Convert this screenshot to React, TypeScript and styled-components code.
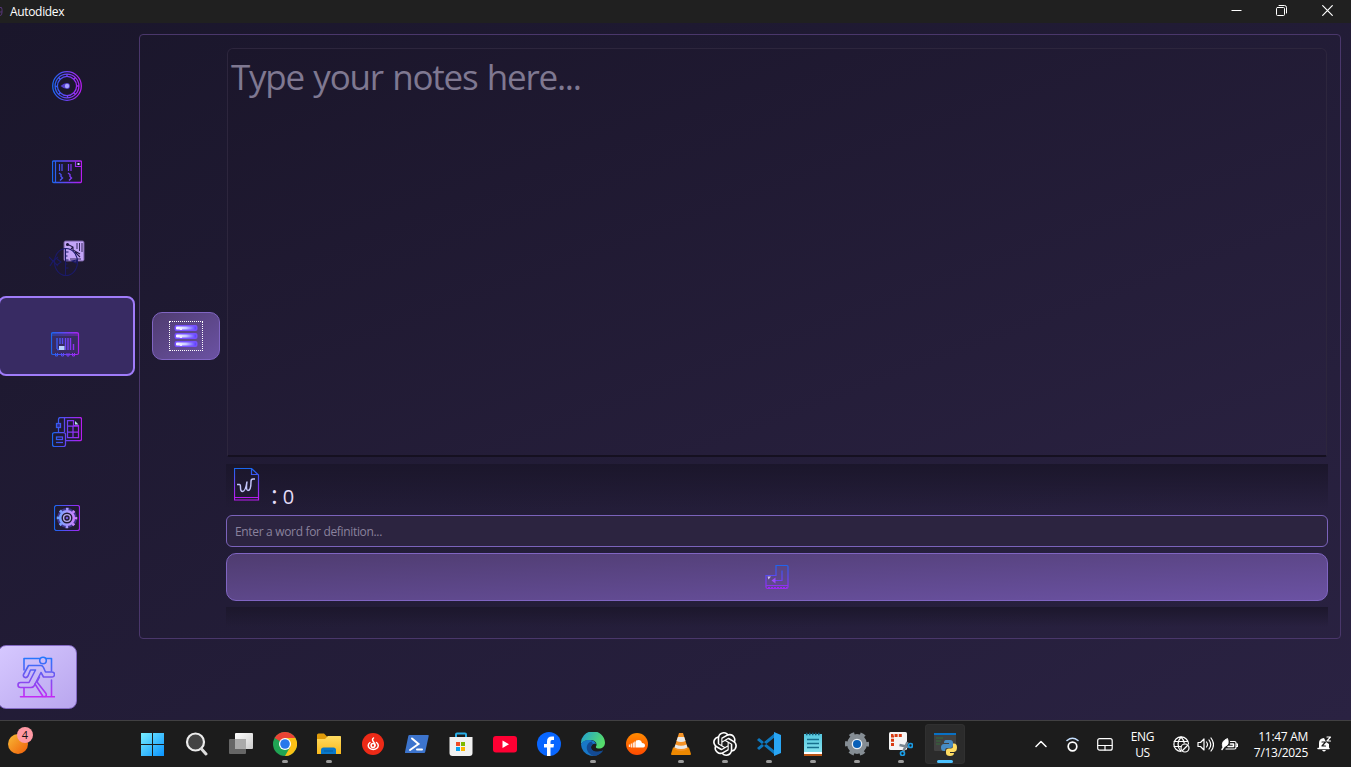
import React from "react";
import styled, { createGlobalStyle } from "styled-components";

const GlobalStyle = createGlobalStyle`
  * { box-sizing: border-box; }
  body { margin: 0; overflow: hidden; font-family: "Open Sans", "Noto Sans", sans-serif; }
  button { font: inherit; padding: 0; cursor: pointer; }
  svg { display: block; flex: none; }
`;

const Desktop = styled.div`
  width: 1351px;
  height: 767px;
  display: flex;
  flex-direction: column;
  overflow: hidden;
`;

const TitleBar = styled.header`
  height: 23px;
  flex: none;
  display: flex;
  align-items: center;
  justify-content: space-between;
  background: #202020;
  color: #fff;
`;

const TitleGroup = styled.div`
  display: flex;
  align-items: center;
  gap: 7px;
`;

const Title = styled.span`
  font-size: 12px;
  line-height: 16px;
  letter-spacing: -0.33px;
`;

const WindowControls = styled.div`
  display: flex;
  height: 100%;
  padding-right: 1px;
`;

const ControlButton = styled.button`
  width: 45.5px;
  height: 21px;
  border: 0;
  background: transparent;
  display: flex;
  align-items: center;
  justify-content: center;
`;

const AppBody = styled.div`
  flex: 1;
  min-height: 0;
  display: flex;
  background: linear-gradient(to bottom right, #1a162b, #2a2242);
`;

const Sidebar = styled.nav`
  width: 139px;
  flex: none;
  display: flex;
  flex-direction: column;
  justify-content: space-between;
  padding: 14px 4px 11px 0;
`;

const NavList = styled.div`
  display: flex;
  flex-direction: column;
  gap: 6.4px;
`;

const NavButton = styled.button<{ $active?: boolean }>`
  height: 80px;
  margin-left: -2px;
  padding: ${(p) => (p.$active ? "16px 3px 0 0" : "18px 0 0 0")};
  display: flex;
  align-items: center;
  justify-content: center;
  border: 2px solid ${(p) => (p.$active ? "#a07cfa" : "transparent")};
  border-radius: 8px;
  background: ${(p) => (p.$active ? "#382b63" : "transparent")};
`;

const ExitButton = styled.button`
  width: 79px;
  height: 64px;
  margin-left: -2px;
  padding-right: 3px;
  display: flex;
  align-items: center;
  justify-content: center;
  border: 1px solid #8469c4;
  border-radius: 8px;
  background: linear-gradient(to bottom right, #d6c8ff, #b9a6ee);
`;

const Frame = styled.main`
  width: 1202px;
  height: 605px;
  margin-top: 11px;
  padding: 13px 12px 11px;
  display: flex;
  gap: 6px;
  border: 1px solid #4a376b;
  border-radius: 4px;
`;

const MenuColumn = styled.div`
  width: 68px;
  flex: none;
  padding-bottom: 4px;
  display: flex;
  flex-direction: column;
  justify-content: center;
`;

const AccentButton = styled.button`
  width: 100%;
  height: 48px;
  flex: none;
  display: flex;
  align-items: center;
  justify-content: center;
  border: 1px solid #8065c2;
  border-radius: 10px;
  background: linear-gradient(to bottom right, #4f3c70, #6b52a3);
`;

const FocusOutline = styled.span`
  width: 34px;
  height: 30px;
  display: flex;
  align-items: center;
  justify-content: center;
  border: 1px dotted #fff;
`;

const NotesColumn = styled.section`
  flex: 1;
  display: flex;
  flex-direction: column;
`;

const NotesArea = styled.div`
  height: 409px;
  flex: none;
  margin: 0 1px;
  padding: 2px 3px 0;
  border: 1px solid #2d263d;
  border-bottom: 2px solid #151020;
  border-radius: 6px 6px 2px 2px;
  background: linear-gradient(to bottom right, #1b162b, #292140);
  color: #7f7891;
  font-size: 35px;
  line-height: 52px;
  letter-spacing: -1.24px;
  word-spacing: 1.6px;
`;

const CountBar = styled.div`
  height: 45px;
  margin-top: 7px;
  padding: 4px 8px 0;
  display: flex;
  gap: 11px;
  background: linear-gradient(#1b162b, rgba(35, 28, 56, 0));
  color: #e3dcf7;
`;

const CountText = styled.span`
  height: 41px;
  padding-top: 12px;
  display: flex;
  align-items: baseline;
  gap: 5px;
  font-size: 20px;
  line-height: 28px;
`;

const Colon = styled.span`
  font-size: 26px;
  line-height: 28px;
`;

const WordInput = styled.input`
  height: 32px;
  margin: 6px 0;
  padding: 0 8px 0 8px;
  border: 1px solid #7b63bb;
  border-radius: 6px;
  background: #2c2440;
  color: #e3dcf7;
  font-family: inherit;
  font-size: 12px;
  letter-spacing: -0.33px;
  outline: none;
  &::placeholder { color: #8a829d; opacity: 1; }
`;

const ResultBar = styled.div`
  height: 20px;
  margin-top: 6px;
  background: linear-gradient(#1c172c, rgba(35, 28, 56, 0));
`;

const Taskbar = styled.footer`
  height: 47px;
  flex: none;
  display: flex;
  border-top: 1px solid #414042;
  background: #1c1c1c;
  color: #fff;
`;

const WidgetSlot = styled.div`
  width: 131px;
  padding: 5px 0 0 7px;
`;

const TaskApps = styled.div`
  display: flex;
`;

const TaskItem = styled.div<{ $active?: boolean }>`
  width: 40px;
  height: 40px;
  margin: 3px 2px;
  padding-top: 8px;
  display: flex;
  flex-direction: column;
  align-items: center;
  gap: 4px;
  border-radius: 4px;
  background: ${(p) => (p.$active ? "#2b2b2b" : "transparent")};
  box-shadow: ${(p) => (p.$active ? "0 0 0 1px #303030 inset" : "none")};
`;

const Indicator = styled.span<{ $active?: boolean }>`
  width: ${(p) => (p.$active ? 16 : 6)}px;
  height: 3px;
  border-radius: 2px;
  background: ${(p) => (p.$active ? "#4cc2ff" : "#9a9a9a")};
`;

const Tray = styled.div`
  margin-left: auto;
  padding-right: 19px;
  display: flex;
  align-items: center;
`;

const TrayIcon = styled.span<{ $gap: number }>`
  margin-right: ${(p) => p.$gap}px;
`;

const TrayText = styled.div<{ $align: string; $gap: number; $width: number }>`
  width: ${(p) => p.$width}px;
  margin-right: ${(p) => p.$gap}px;
  padding-top: 1px;
  text-align: ${(p) => p.$align};
  font-size: 12px;
  line-height: 16px;
  letter-spacing: -0.3px;
  white-space: nowrap;
`;

const Gradient = ({ id, vertical }: { id: string; vertical?: boolean }) => (
  <defs>
    <linearGradient id={id} x1="0" y1="0" x2={vertical ? "0" : "30"} y2={vertical ? "30" : "0"} gradientUnits="userSpaceOnUse">
      <stop offset="0" stopColor="#1768ee" />
      <stop offset="0.5" stopColor="#6b42f5" />
      <stop offset="1" stopColor="#b91bf0" />
    </linearGradient>
  </defs>
);

const GaugeIcon = () => (
  <svg width="30" height="30" viewBox="0 0 30 30" fill="none" stroke="url(#g1)" strokeWidth="1.300">
    <Gradient id="g1" />
    <circle cx="15" cy="15" r="14.300" />
    <circle cx="15" cy="15" r="11.900" />
    <circle cx="15" cy="15" r="9.600" />
    <path d="M15 3v3M15.500 24v3M3 15.500h3M24 15h3M6.500 6.500l2 2M21.500 21.500l2 2M6.500 23.500l2-2M21.500 8.500l2-2" />
    <path d="M8.500 15Q12 12 15 12a3 3 0 0 1 0 6Q12 18 8.500 15z" fill="#5540d0" stroke="none" />
    <circle cx="15" cy="15" r="2.200" fill="#a9a4ff" stroke="none" />
  </svg>
);

const BoardIcon = () => (
  <svg width="30" height="24" viewBox="0 0.500 30 24" fill="none" stroke="url(#g2)">
    <Gradient id="g2" />
    <rect x="0.500" y="1.500" width="29" height="21.500" rx="1" strokeWidth="1.300" />
    <path d="M3.500 1.500v21.500M7.500 4.500v7M10 4.500v7M16.500 4.500v7M19 4.500v7M23.500 2v5h6" strokeWidth="1.200" />
    <path d="M7 13.500l2 1.500v2l1.500 1.500L8 21M16 13.500l2 1.500v2l1.500 1.500L17 21" strokeWidth="1.400" />
    <rect x="25.500" y="3.500" width="2" height="2" fill="#c9d7ff" stroke="none" />
  </svg>
);

const FishIcon = () => (
  <svg width="36" height="38" viewBox="0 0 36 38" fill="none">
    <rect x="15" y="1" width="20" height="20" rx="1.500" fill="#c3a5f7" stroke="#735b9c" />
    <g stroke="#241a45" strokeWidth="1.100">
      <path d="M18 4l6 3v3l7 4M24 7l-2 2M26 12l5 5" />
      <path d="M28 3v6M30.500 3v8M33 3v9M21 19h11" strokeWidth=".9" />
      <circle cx="18.500" cy="4.500" r="1" fill="#241a45" />
    </g>
    <g stroke="#1b1a68" strokeWidth="1.100">
      <ellipse cx="17" cy="22" rx="11.500" ry="13.500" />
      <path d="M16.500 9v26M16.500 12h3M16.500 16h2M16.500 20h3M16.500 24h2M16.500 28h3M0 17l4 4-3 5M4 21l5-4M4 21l5 5M8 19l4 3-4 3M23 21l4 2 1-3z" />
    </g>
  </svg>
);

const NotesIcon = () => (
  <svg width="29" height="26" viewBox="0 0 29 26" fill="none" stroke="url(#g3)">
    <Gradient id="g3" />
    <rect x="0.500" y="1.500" width="27" height="22" rx="1.500" strokeWidth="1.200" />
    <path d="M1 4h27M1 2.500h27" strokeOpacity=".65" />
    <path d="M6 7v11M9 7v6M11.500 7v6M14.500 7v12M17 7v12M19.500 7v12M22.500 13v6M6 18.500h2" strokeWidth="1.400" />
    <path d="M4.500 22v3h2v-3M10.500 22v3h2v-3M16 22v3h2v-3M21.500 22v3h2v-3" />
    <rect x="8" y="15" width="5.500" height="4" fill="#b8cfff" stroke="none" />
  </svg>
);

const TableIcon = () => (
  <svg width="30" height="30" viewBox="0 0 30 30" fill="none" stroke="url(#g4)" strokeWidth="1.250">
    <Gradient id="g4" />
    <path d="M6.500 15V2.500q0-2 2-2H28q1.500 0 1.500 1.500v20q0 1.500-1.500 1.500H14M12.500 1v14" />
    <path d="M15.500 3.500h6v5h5V20.500h-11zM15.500 9h11M15.500 15h11M21 9v12" />
    <rect x="4.500" y="6.500" width="4" height="4" fill="#312a8d" />
    <rect x="0.500" y="15.500" width="13" height="14" rx="2" />
    <rect x="4.500" y="20" width="6" height="2.500" />
    <path d="M4 25.500h7" />
    <path d="M23 4l3.500 3.500H23z" fill="#bce4f0" stroke="none" />
  </svg>
);

const SettingsIcon = () => (
  <svg width="26" height="26" viewBox="0 0 26 26" fill="none">
    <Gradient id="g5" />
    <defs>
      <linearGradient id="gear" x1="3" x2="23" y1="0" y2="0" gradientUnits="userSpaceOnUse"><stop stopColor="#64a2ff" /><stop offset=".5" stopColor="#a69aff" /><stop offset="1" stopColor="#d878ff" /></linearGradient>
    </defs>
    <rect x="0.500" y="0.500" width="25" height="25" rx="2" stroke="url(#g5)" strokeWidth="1.200" />
    <circle cx="13" cy="13" r="8.500" stroke="#3f3590" strokeWidth="3" />
    <circle cx="13" cy="13" r="9" stroke="url(#gear)" strokeWidth="2.600" strokeDasharray="2.500 4.568" strokeDashoffset="1.250" />
    <circle cx="13" cy="13" r="6.800" stroke="url(#gear)" strokeWidth="2.600" />
    <circle cx="13" cy="13" r="3.400" stroke="#b8a9e9" strokeWidth="1.400" />
    <circle cx="13" cy="13" r="1.300" fill="#7258d8" />
  </svg>
);

const ExitIcon = () => (
  <svg width="38" height="42" viewBox="0 0 38 42" fill="none" stroke="url(#g6)" strokeWidth="1.600" strokeLinejoin="round" strokeLinecap="round">
    <defs>
      <linearGradient id="g6" x1="0" y1="0" x2="0" y2="42" gradientUnits="userSpaceOnUse">
        <stop stopColor="#1d7aff" /><stop offset=".5" stopColor="#7454ef" /><stop offset="1" stopColor="#c727f5" />
      </linearGradient>
    </defs>
    <path d="M7 14V2.500h16M29 2.500h5.500V15M34.500 24v16M7 32v8M3.500 40.700h34" />
    <circle cx="26" cy="4.500" r="3.300" />
    <path d="M11.500 9.500h12.500q1.500 0 2.500 2l2 4.500H35a2.500 2.500 0 0 1 0 5h-8.500L24 16.500 17 30q-1 1.500-3 1.500H3.500a2.500 2.500 0 0 1 0-5H12L18.500 14h-5L11 20q-1.500 2.500-4 1-1-1-.5-2.500z" />
    <path d="M22.500 21l-2.500 5 9 11.500q1 2.500-1 3M18 28l8 12.500" />
  </svg>
);

const MenuIcon = () => (
  <svg width="26" height="26" viewBox="0 0 26 26">
    <defs>
      <linearGradient id="bar"><stop stopColor="#fff" /><stop offset=".5" stopColor="#c7caff" /><stop offset="1" stopColor="#5a3dff" /></linearGradient>
    </defs>
    {[2, 10, 18].map((y) => (
      <g key={y}>
        <rect x="1.500" y={y} width="23" height="6" rx="2" fill="#7650ff" />
        <rect x="3" y={y + 1.5} width="20" height="3" rx="1" fill="url(#bar)" />
        <path d={`M6 ${y + 3}h3v2H7z`} fill="#eee9ff" />
      </g>
    ))}
  </svg>
);

const WordDocIcon = () => (
  <svg width="26" height="33" viewBox="0 0 26 33" fill="none" stroke="url(#g8)">
    <Gradient id="g8" vertical />
    <path d="M.5.5h17l7 6.500v25H.5zM17.500.5v6h7M.5 29.500h24" strokeWidth="1.200" />
    <path d="M3 16.500h2.500q1 0 1 3 0 4 2 4 3 0 4.500-10-1.500 9 1 9 3 0 3-9 0-2.500 2-2.500h2" stroke="#c3c5fa" strokeWidth="1.500" />
  </svg>
);

const EnterIcon = () => (
  <svg width="24" height="26" viewBox="-1 0 24 26" fill="none" stroke="url(#g9)" strokeWidth="1.200">
    <Gradient id="g9" vertical />
    <path d="M10 1.500h11q1 0 1 1v20q0 2-1.500 2H1.500Q0 24.500 0 23V11.500h10zM0 21.500h22M16 6.500v10H9" />
    <path d="M2 23.500h19" strokeDasharray="2 1" />
    <path d="M5.500 16.500l4-3v6z" fill="#9b4bfa" stroke="none" />
    <path d="M1.500 12.500H5L2.500 15.500z" fill="#ccbceb" stroke="none" />
  </svg>
);

const appIcons: { name: string; running?: boolean; active?: boolean; art: React.ReactNode }[] = [
  { name: "start", art: <><defs><linearGradient id="win" x2="24" y2="24" gradientUnits="userSpaceOnUse"><stop stopColor="#7af0ff" /><stop offset="1" stopColor="#0791ff" /></linearGradient></defs><path d="M0 1h11v11H0zM12 1h11v11H12zM0 13h11v11H0zM12 13h11v11H12z" fill="url(#win)" /></> },
  { name: "search", art: <><circle cx="10.500" cy="10" r="8.500" fill="#444" stroke="#ececec" strokeWidth="2.200" /><path d="M16.500 17l4.500 5" stroke="#ddd" strokeWidth="3" strokeLinecap="round" /></> },
  { name: "tasks", art: <><defs><linearGradient id="tv" x2="1" y2="1"><stop stopColor="#fff" /><stop offset="1" stopColor="#ccc" /></linearGradient></defs><rect x="0" y="7" width="17" height="15" rx="1" fill="#666" /><rect x="6" y="1" width="18" height="16" rx="1" fill="url(#tv)" /><path d="M6 7h11v10H6z" fill="#aaa" /></> },
  { name: "chrome", running: true, art: <><circle cx="12" cy="12" r="12" fill="#20a454" /><path d="M12 12L1.600 6A12 12 0 0 1 22.400 6z" fill="#ea4335" /><path d="M12 6h10.400A12 12 0 0 1 12 24l5.200-9z" fill="#fbc116" /><circle cx="12" cy="12" r="6" fill="#fff" /><circle cx="12" cy="12" r="4.800" fill="#2878eb" /></> },
  { name: "explorer", running: true, art: <><defs><linearGradient id="fold" x2="0" y2="1"><stop stopColor="#ffdc62" /><stop offset="1" stopColor="#f9b91c" /></linearGradient></defs><path d="M0 3q0-1.500 1.500-1.500H7l3 3h14V9H0z" fill="#e09b09" /><path d="M0 7h8l3-3h12q1 0 1 1v17H0z" fill="url(#fold)" /><path d="M4 22v-4q0-2.500 2.500-2.500h10q2.500 0 2.500 2.500v4z" fill="#0878cb" /><path d="M7 19h9" stroke="#075a9e" /></> },
  { name: "music", art: <><circle cx="12" cy="12" r="11" fill="#ed2a17" /><g fill="none" stroke="#fff" strokeWidth="1.500" strokeLinecap="round"><path d="M12.500 6q-2 1.500 0 3.700 1.500 1.500 1.500 3.800" /><circle cx="12" cy="13.500" r="1.900" /><path d="M9 10.500a5 4 0 1 0 6.500 0" /></g></> },
  { name: "powershell", art: <><path d="M4.500 3H23q1 0 .7 1l-3.500 16q-.2 1-1.200 1H.7q-1 0-.7-1L3.300 4q.2-1 1.200-1z" fill="#3c74cd" /><path d="M7 6.500l6.500 5.500L5 18M12 17.500h5" fill="none" stroke="#fff" strokeWidth="2" strokeLinecap="round" /></> },
  { name: "store", art: <><path d="M7 6V2.500q0-1 1-1h8q1 0 1 1V6" fill="none" stroke="#28aee8" strokeWidth="2" /><path d="M.5 5h23v16q0 3-3 3h-17q-3 0-3-3z" fill="#f1f1f1" /><path d="M7 10h4v4H7z" fill="#f04c25" /><path d="M12 10h4v4h-4z" fill="#7db800" /><path d="M7 15h4v4H7z" fill="#08a2ee" /><path d="M12 15h4v4h-4z" fill="#fdb600" /></> },
  { name: "youtube", art: <><rect y="4" width="24" height="16.500" rx="3" fill="#ff0033" /><path d="M9.500 8.500l6.500 3.700-6.500 3.700z" fill="#fff" /></> },
  { name: "facebook", art: <><circle cx="12" cy="12" r="12" fill="#0866ff" /><path d="M10 24v-8.500H7V12h3V9.500q0-5 5-5h2V8h-2q-1.500 0-1.500 1.700V12H17l-.5 3.500h-3V24z" fill="#fff" /></> },
  { name: "edge", running: true, art: <><defs><linearGradient id="edge" y2=".4"><stop stopColor="#209dd7" /><stop offset="1" stopColor="#55dc6b" /></linearGradient></defs><path d="M0 12a12 12 0 0 1 24-1.500c0 4.500-3.500 6.500-7 6-2.500-.4-2.500-1.500-1.500-3C16 10 13 8 9.500 8 4 8 1 10.500 0 12z" fill="url(#edge)" /><path d="M0 12.500C1 9 5 7.500 9.500 8c3 .3 5 2 5.500 4-2-1-5 0-5 3.500 0 4 5 6.500 12 3A12 12 0 0 1 0 12.500z" fill="#1878c8" /><path d="M10.500 9.500C5 11 4 18 9 22q1.500 1.500 3.500 2c4 0 7.500-2 9.500-5.500-6.500 2.500-12 .5-12-3.500 0-1.500.8-2.500 2-3z" fill="#134a93" /></> },
  { name: "soundcloud", art: <><defs><linearGradient id="sc" x2="0" y2="1"><stop stopColor="#ff8a00" /><stop offset="1" stopColor="#ff4a00" /></linearGradient></defs><circle cx="12" cy="12" r="11" fill="url(#sc)" /><path d="M11 15.500V8.500q5-2 6 2.500 3 0 3 2.500T17.500 15.500z" fill="#fff" /><path d="M4.500 12.500v2.500M6.500 11.500v4M8.500 10.500v5M10 9.500v6" stroke="#ffe4d2" strokeWidth="1.400" /></> },
  { name: "vlc", running: true, art: <><path d="M4 15.500h16L22 22q0 1-1 1H3q-1 0-1-1z" fill="#ed8800" /><path d="M10 1h4l5 16q-7 4-14 0z" fill="#f59326" /><path d="M8.900 5h6.300l1.300 4q-4.500 2-9 0zM6.500 12.500q5.500 2.500 11 0l1 3q-6.500 3-13 0z" fill="#e9e9e9" /></> },
  { name: "openai", running: true, art: <path fill="#fff" d="M22.282 9.821a5.985 5.985 0 0 0-.516-4.910 6.046 6.046 0 0 0-6.510-2.900A6.065 6.065 0 0 0 4.981 4.182a5.985 5.985 0 0 0-3.998 2.900 6.046 6.046 0 0 0 .743 7.097 5.980 5.980 0 0 0 .510 4.911 6.051 6.051 0 0 0 6.515 2.900A5.985 5.985 0 0 0 13.260 24a6.056 6.056 0 0 0 5.772-4.206 5.990 5.990 0 0 0 3.998-2.900 6.056 6.056 0 0 0-.748-7.073zM13.260 22.430a4.476 4.476 0 0 1-2.876-1.041l.142-.080 4.778-2.758a.795.795 0 0 0 .393-.681v-6.737l2.020 1.169a.071.071 0 0 1 .038.052v5.583a4.504 4.504 0 0 1-4.495 4.493zM3.600 18.304a4.471 4.471 0 0 1-.535-3.014l.142.085 4.783 2.758a.771.771 0 0 0 .781 0l5.843-3.369v2.332a.080.080 0 0 1-.033.062L9.740 19.950a4.499 4.499 0 0 1-6.140-1.646zM2.340 7.896a4.485 4.485 0 0 1 2.366-1.973V11.600a.766.766 0 0 0 .388.677l5.814 3.354-2.020 1.169a.076.076 0 0 1-.071 0l-4.830-2.787A4.504 4.504 0 0 1 2.340 7.896zm16.597 3.855l-5.833-3.387L15.119 7.200a.076.076 0 0 1 .071 0l4.830 2.791a4.494 4.494 0 0 1-.676 8.105v-5.678a.790.790 0 0 0-.407-.667zm2.010-3.023l-.141-.085-4.774-2.782a.776.776 0 0 0-.785 0L9.409 9.230V6.897a.066.066 0 0 1 .028-.061l4.830-2.787a4.499 4.499 0 0 1 6.680 4.679zM8.306 12.863l-2.020-1.164a.080.080 0 0 1-.038-.057V6.074a4.499 4.499 0 0 1 7.376-3.453l-.142.080-4.778 2.758a.795.795 0 0 0-.393.682zm1.097-2.365l2.602-1.500 2.607 1.500v2.999l-2.597 1.500-2.607-1.500z" /> },
  { name: "code", running: true, art: <><path d="M0 8l2-2 16 13v4zM0 16l2 2L18 5V1z" fill="#0d78bf" /><path d="M17 0l7 3v18l-7 3z" fill="#29a6f5" /></> },
  { name: "notepad", running: true, art: <><defs><linearGradient id="np" x2="0" y2="1"><stop stopColor="#54c7df" /><stop offset="1" stopColor="#8ce4ef" /></linearGradient></defs><rect x="3" y="2" width="18" height="20" fill="url(#np)" /><path d="M5 2h15" stroke="#155b76" strokeWidth="2.500" strokeDasharray="1.500 1.500" /><path d="M6 7.500h12M6 11.500h12M6 15.500h12" stroke="#176f8e" strokeWidth="1.500" /><path d="M3 20h18v2H3z" fill="#fff" /><path d="M3 22h18v2H3z" fill="#bd5615" /></> },
  { name: "settings", running: true, art: <><circle cx="12" cy="12" r="10.300" fill="none" stroke="#858d94" strokeWidth="3.500" strokeDasharray="5 5.786" strokeDashoffset="2.500" /><circle cx="12" cy="12" r="7.200" fill="none" stroke="#858d94" strokeWidth="5.500" /><circle cx="12" cy="12" r="5.300" fill="#e7eef4" /><circle cx="12" cy="12" r="4" fill="#075fb8" /></> },
  { name: "snip", running: true, art: <><rect width="18" height="18" rx="1.500" fill="#f4f4f4" /><path d="M3.500 14V3.500H14" fill="none" stroke="#d83b12" strokeWidth="3" strokeDasharray="3 1.200" /><path d="M14 20l4.500-10M10.500 13l9 2" stroke="#798690" strokeWidth="2.500" /><circle cx="13.500" cy="21.500" r="2" fill="none" stroke="#199ce5" strokeWidth="1.700" /><circle cx="21.500" cy="13.500" r="2" fill="none" stroke="#199ce5" strokeWidth="1.700" /></> },
  { name: "python", running: true, active: true, art: <><rect x="1" y="1" width="22" height="18" rx="1" fill="#414141" /><path d="M1 1h22v2H1z" fill="#0871c5" /><path d="M3 6h7M3 9h5M3 12h4" stroke="#356c3b" /><path d="M13 8h4q3 0 3 3v2q0 3-3 3h-3q-2 0-2 3h-1q-3 0-3-3.500T11 12h5v-1h-5q0-3 2-3z" fill="#478bc5" /><path d="M20 11.500h1q3 0 3 4T21 20h-4v1h4q0 3-4 3t-4-3v-2q0-2.500 3-2.500h2q2 0 2-2z" fill="#ffdc62" /></> },
];

const LineIcon = ({ w, h, children }: { w: number; h: number; children: React.ReactNode }) => (
  <svg width={w} height={h} viewBox={`0 0 ${w} ${h}`} fill="none" stroke="#fff" strokeWidth="1.200" strokeLinecap="round" strokeLinejoin="round">{children}</svg>
);

export default function App() {
  return (
    <Desktop>
      <GlobalStyle />
      <TitleBar>
        <TitleGroup>
          <svg width="3" height="12" viewBox="0 0 3 12" fill="none" stroke="#573579"><path d="M0 1.500q2-1 2 2v3q0 3-2 3M0 6h2" /></svg>
          <Title>Autodidex</Title>
        </TitleGroup>
        <WindowControls>
          <ControlButton aria-label="Minimize"><LineIcon w={11} h={11}><path d="M.5 5.500h10" strokeLinecap="butt" strokeWidth="1" /></LineIcon></ControlButton>
          <ControlButton aria-label="Restore"><LineIcon w={11} h={11}><rect x=".5" y="2.500" width="8" height="8" rx="1" strokeWidth="1" /><path d="M3 .5h5.500q2 0 2 2V8" strokeWidth="1" /></LineIcon></ControlButton>
          <ControlButton aria-label="Close"><LineIcon w={11} h={11}><path d="M.7.7l9.600 9.600M10.300.7L.7 10.300" /></LineIcon></ControlButton>
        </WindowControls>
      </TitleBar>
      <AppBody>
        <Sidebar>
          <NavList>
            <NavButton><GaugeIcon /></NavButton>
            <NavButton><BoardIcon /></NavButton>
            <NavButton><FishIcon /></NavButton>
            <NavButton $active><NotesIcon /></NavButton>
            <NavButton><TableIcon /></NavButton>
            <NavButton><SettingsIcon /></NavButton>
          </NavList>
          <ExitButton aria-label="Exit"><ExitIcon /></ExitButton>
        </Sidebar>
        <Frame>
          <MenuColumn>
            <AccentButton aria-label="Menu"><FocusOutline><MenuIcon /></FocusOutline></AccentButton>
          </MenuColumn>
          <NotesColumn>
            <NotesArea>Type your notes here...</NotesArea>
            <CountBar>
              <WordDocIcon />
              <CountText><Colon>:</Colon><span>0</span></CountText>
            </CountBar>
            <WordInput placeholder="Enter a word for definition..." />
            <AccentButton aria-label="Define"><EnterIcon /></AccentButton>
            <ResultBar />
          </NotesColumn>
        </Frame>
      </AppBody>
      <Taskbar>
        <WidgetSlot>
          <svg width="28" height="30" viewBox="0 0 28 30">
            <defs><linearGradient id="sun" x2="1" y2="1"><stop stopColor="#f7bb37" /><stop offset="1" stopColor="#f05d08" /></linearGradient></defs>
            <circle cx="11" cy="18" r="10" fill="url(#sun)" />
            <circle cx="18" cy="9" r="8" fill="#ff99a4" />
            <text x="18" y="13" textAnchor="middle" fontSize="11" fill="#111">4</text>
          </svg>
        </WidgetSlot>
        <TaskApps>
          {appIcons.map((a) => (
            <TaskItem key={a.name} $active={a.active}>
              <svg width="24" height="24" viewBox="0 0 24 24">{a.art}</svg>
              {a.running && <Indicator $active={a.active} />}
            </TaskItem>
          ))}
        </TaskApps>
        <Tray>
          <TrayIcon $gap={19}><LineIcon w={12} h={8}><path d="M1 6.500l5-5 5 5" strokeWidth="1.500" /></LineIcon></TrayIcon>
          <TrayIcon $gap={18}><LineIcon w={13} h={15}><circle cx="6.500" cy="9.500" r="4.300" strokeWidth="1.700" /><path d="M1 3.500q5.500-4.500 11 0" stroke="#c5dfff" strokeWidth="1.500" /></LineIcon></TrayIcon>
          <TrayIcon $gap={14}><LineIcon w={16} h={13}><rect x=".7" y=".7" width="14.500" height="11.500" rx="2" /><path d="M1 7.500h14M8 7.500v4.500" /></LineIcon></TrayIcon>
          <TrayText $align="center" $width={32} $gap={14}>ENG<br />US</TrayText>
          <TrayIcon $gap={7}><LineIcon w={17} h={17}><path d="M8 15.500A7.300 7.300 0 1 1 15.500 8M1 5.500h14M1 10.500h7M8 1q-6 7 0 14.500M8 1q3 3 3.200 6" /><circle cx="12" cy="12" r="4" /><path d="M9.500 14.500l5-5" /></LineIcon></TrayIcon>
          <TrayIcon $gap={7}><LineIcon w={17} h={15}><path d="M1 5.500h2.500L7 2v11L3.500 9.500H1zM9.500 5q2 2.500 0 5M12 3q3.500 4.500 0 9M14 1q5 6.500 0 13" /></LineIcon></TrayIcon>
          <TrayIcon $gap={12.5}><LineIcon w={17} h={15}><path d="M9.500 4.500h4q1.500 0 1.500 1.500v4.500q0 1.500-1.500 1.500H5M15.500 7h1v2.500h-1" /><path d="M1.500 9.500Q0 4 6.500 1.500 9 7.500 4 9.500z" fill="#fff" strokeWidth=".8" /><path d="M1 12.500l2-3M9.500 7h3v2.500H7" strokeWidth="1.500" /></LineIcon></TrayIcon>
          <TrayText $align="right" $width={58} $gap={9}>11:47 AM<br />7/13/2025</TrayText>
          <LineIcon w={15} h={17}><path d="M1 12.500h11" strokeWidth="1.500" /><path d="M2 12V7q0-4.500 5-5l2 4 3 2v4zM5 14h4q-2 3-4 0z" fill="#fff" stroke="none" /><path d="M5 6h3.500L5 10h3.500" stroke="#1c1c1c" /><path d="M10 1h3.500L10 5h3.500" /></LineIcon>
        </Tray>
      </Taskbar>
    </Desktop>
  );
}
